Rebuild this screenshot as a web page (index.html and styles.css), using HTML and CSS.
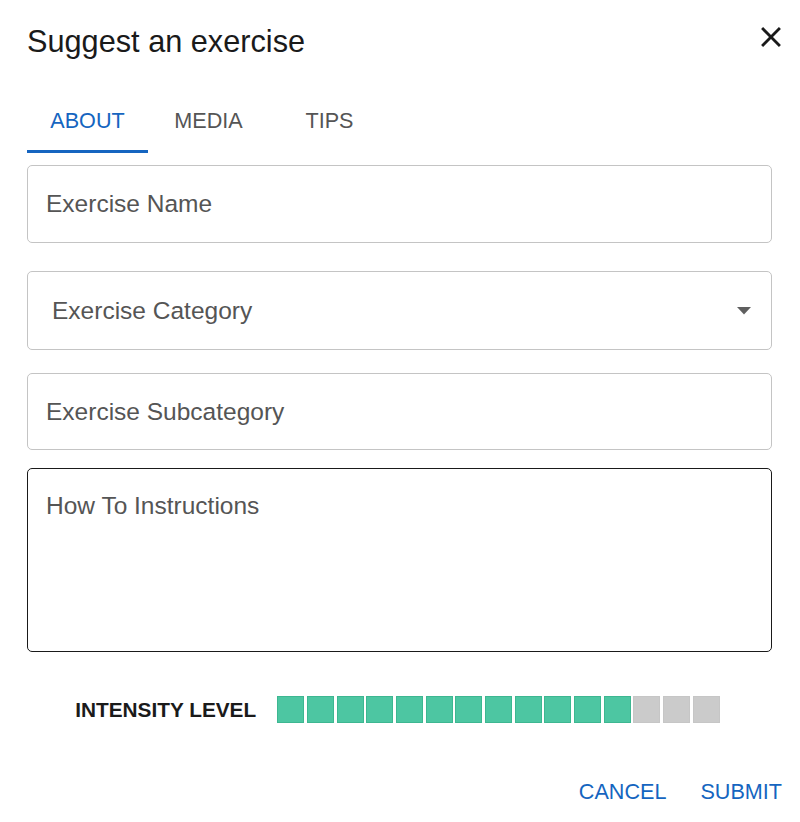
FILE: index.html
```html
<!DOCTYPE html>
<html>
<head>
<meta charset="utf-8">
<link rel="stylesheet" href="styles.css">
</head>
<body>
<div class="dialog">
  <div class="header">
    <h1 class="title">Suggest an exercise</h1>
    <button class="close" aria-label="close">
      <svg viewBox="0 0 24 24" width="34" height="34"><path d="M19 6.41L17.59 5 12 10.59 6.41 5 5 6.41 10.59 12 5 17.59 6.41 19 12 13.41 17.59 19 19 17.59 13.41 12z" fill="#1a1a1a"/></svg>
    </button>
  </div>
  <div class="tabs">
    <div class="tab active">ABOUT</div>
    <div class="tab">MEDIA</div>
    <div class="tab">TIPS</div>
  </div>
  <div class="field f1"><span class="ph">Exercise Name</span></div>
  <div class="field f2 select"><span class="ph">Exercise Category</span>
    <svg class="caret" viewBox="0 0 14 8" width="14" height="8"><path d="M0 0h14L7 7.5z" fill="#5f5f5f"/></svg>
  </div>
  <div class="field f3"><span class="ph">Exercise Subcategory</span></div>
  <div class="field area"><span class="ph">How To Instructions</span></div>
  <div class="intensity">
    <span class="label">INTENSITY LEVEL</span>
    <div class="blocks">
      <span class="b on"></span><span class="b on"></span><span class="b on"></span><span class="b on"></span>
      <span class="b on"></span><span class="b on"></span><span class="b on"></span><span class="b on"></span>
      <span class="b on"></span><span class="b on"></span><span class="b on"></span><span class="b on"></span>
      <span class="b"></span><span class="b"></span><span class="b"></span>
    </div>
  </div>
  <div class="actions">
    <button class="btn">CANCEL</button>
    <button class="btn">SUBMIT</button>
  </div>
</div>
</body>
</html>
```
FILE: styles.css
```css
html, body {
  margin: 0;
  padding: 0;
  background: #fff;
}
body {
  font-family: "Liberation Sans", Arial, Helvetica, sans-serif;
  color: #1a1a1a;
}
.dialog {
  width: 800px;
  height: 822px;
  box-sizing: border-box;
  padding: 24px 28px 0 27px;
}
.header {
  display: flex;
  justify-content: space-between;
  align-items: flex-start;
}
.title {
  margin: 0;
  font-size: 30.7px;
  font-weight: 400;
  line-height: 36px;
  color: #1a1a1a;
}
.close {
  border: 0;
  background: none;
  padding: 0;
  margin: -4px -16px 0 0;
  width: 34px;
  height: 34px;
  display: flex;
}
.tabs {
  display: flex;
  margin-top: 32px;
}
.tab {
  width: 121px;
  height: 61px;
  box-sizing: border-box;
  display: flex;
  align-items: center;
  justify-content: center;
  font-size: 21.6px;
  color: #555;
  border-bottom: 3px solid transparent;
}
.tab.active {
  color: #1565c0;
  border-bottom-color: #1565c0;
}
.field {
  box-sizing: border-box;
  border: 1.5px solid #c4c4c4;
  border-radius: 5px;
  display: flex;
  align-items: center;
  padding-left: 18px;
  font-size: 24.5px;
  color: #555;
}
.f1 { margin-top: 12px; height: 78px; }
.f2 { margin-top: 28px; height: 79px; padding-left: 24px; justify-content: space-between; padding-right: 20px; }
.f3 { margin-top: 23px; height: 77px; }
.area {
  margin-top: 18px;
  height: 184px;
  align-items: flex-start;
  border-color: #1a1a1a;
  padding-top: 23px;
  line-height: 28px;
}
.caret { display: block; }
.intensity {
  display: flex;
  align-items: center;
  justify-content: center;
  gap: 21px;
  margin-top: 44px;
  padding-right: 4px;
}
.label {
  font-weight: 700;
  font-size: 20.8px;
  color: #1a1a1a;
}
.blocks {
  display: flex;
  gap: 2.7px;
}
.b {
  width: 27px;
  height: 27px;
  box-sizing: border-box;
  background: #cbcbcb;
  border: 1px solid #c6c6c6;
}
.b.on {
  background: #4dc6a2;
  border-color: #3db791;
}
.actions {
  display: flex;
  justify-content: flex-end;
  gap: 34px;
  margin-top: 56px;
  margin-right: -10px;
}
.btn {
  border: 0;
  background: none;
  padding: 0;
  font-family: "Liberation Sans", Arial, sans-serif;
  font-size: 21.6px;
  color: #1565c0;
  line-height: 26px;
}
```
